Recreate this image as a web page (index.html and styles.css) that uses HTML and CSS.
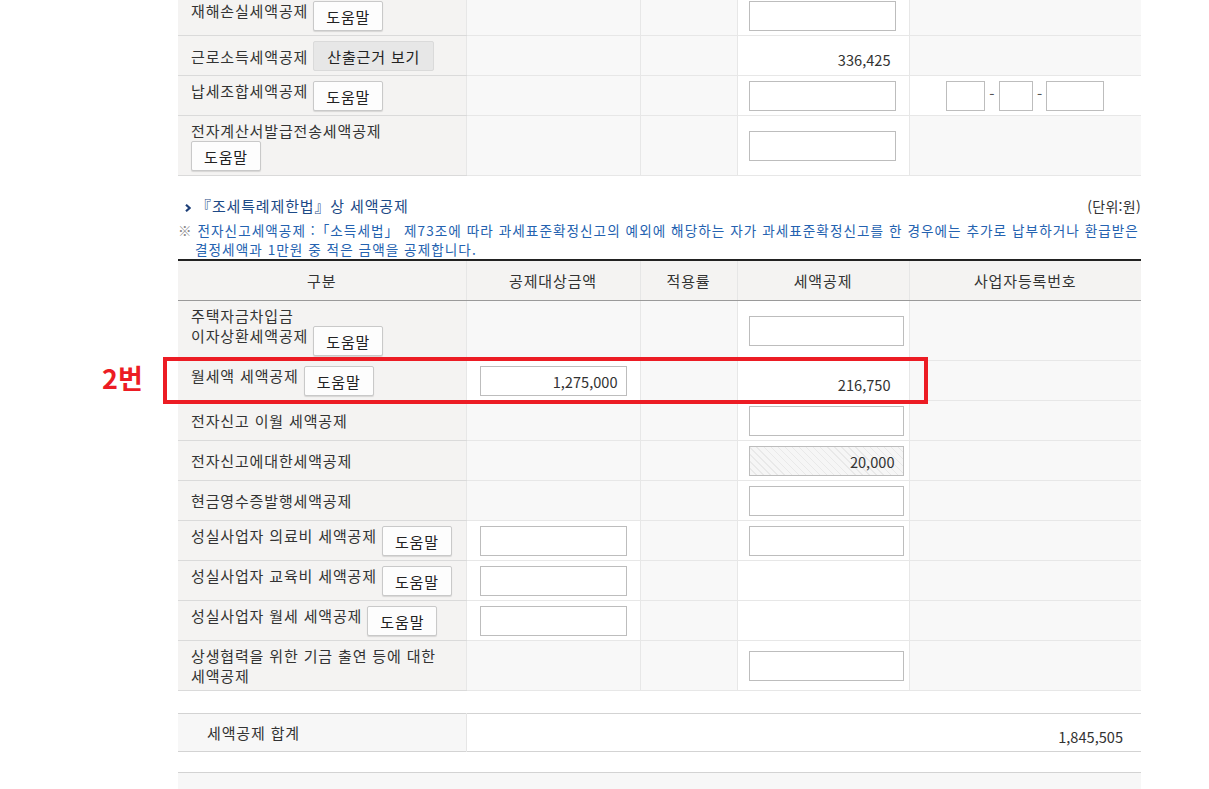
FILE: index.html
```html
<!DOCTYPE html>
<html lang="ko">
<head>
    <meta charset="UTF-8">
    <title>세액공제</title>
    <link rel="stylesheet" href="styles.css">
</head>
<body>
<div class="page">

    <table class="grid">
        <colgroup>
            <col class="w1"><col class="w2"><col class="w3"><col class="w4"><col class="w5">
        </colgroup>
        <tr>
            <td class="lbl">재해손실세액공제 <button class="btn-help">도움말</button></td>
            <td></td>
            <td></td>
            <td class="tax wh"><input type="text" class="inp inp-s"></td>
            <td></td>
        </tr>
        <tr>
            <td class="lbl">근로소득세액공제 <button class="btn-calc">산출근거 보기</button></td>
            <td></td>
            <td></td>
            <td class="tax wh num">336,425</td>
            <td></td>
        </tr>
        <tr>
            <td class="lbl">납세조합세액공제 <button class="btn-help">도움말</button></td>
            <td></td>
            <td></td>
            <td class="tax wh"><input type="text" class="inp inp-s"></td>
            <td class="wh bizno">
                <input type="text" class="inp bn1"> - <input type="text" class="inp bn2"> - <input type="text" class="inp bn3">
            </td>
        </tr>
        <tr>
            <td class="lbl">전자계산서발급전송세액공제<br><button class="btn-help">도움말</button></td>
            <td></td>
            <td></td>
            <td class="tax wh"><input type="text" class="inp inp-s"></td>
            <td></td>
        </tr>
    </table>

    <div class="sect-head">
        <h3 class="sect-title">
            <svg class="chev" width="6" height="8" viewBox="0 0 6 8"><path d="M1 0.8 L4.6 4 L1 7.2" fill="none" stroke="#1d3f78" stroke-width="2.2"/></svg>
            『조세특례제한법』상 세액공제
        </h3>
        <span class="unit">(단위:원)</span>
    </div>
    <p class="note"><span class="mark">※</span> 전자신고세액공제 :「소득세법」 제73조에 따라 과세표준확정신고의 예외에 해당하는 자가 과세표준확정신고를 한 경우에는 추가로 납부하거나 환급받은<br>결정세액과 1만원 중 적은 금액을 공제합니다.</p>

    <div class="annot">
        <table class="grid">
            <colgroup>
                <col class="w1"><col class="w2"><col class="w3"><col class="w4"><col class="w5">
            </colgroup>
            <tr>
                <th>구분</th>
                <th>공제대상금액</th>
                <th>적용률</th>
                <th>세액공제</th>
                <th>사업자등록번호</th>
            </tr>
            <tr>
                <td class="lbl">주택자금차입금<br>이자상환세액공제 <button class="btn-help">도움말</button></td>
                <td></td>
                <td></td>
                <td class="tax wh"><input type="text" class="inp"></td>
                <td></td>
            </tr>
            <tr>
                <td class="lbl">월세액 세액공제 <button class="btn-help">도움말</button></td>
                <td class="amt wh"><input type="text" class="inp inp-s" value="1,275,000"></td>
                <td></td>
                <td class="tax wh num">216,750</td>
                <td></td>
            </tr>
            <tr>
                <td class="lbl">전자신고 이월 세액공제</td>
                <td></td>
                <td></td>
                <td class="tax wh"><input type="text" class="inp"></td>
                <td></td>
            </tr>
            <tr>
                <td class="lbl">전자신고에대한세액공제</td>
                <td></td>
                <td></td>
                <td class="tax wh"><input type="text" class="inp inp-ro" value="20,000" readonly></td>
                <td></td>
            </tr>
            <tr>
                <td class="lbl">현금영수증발행세액공제</td>
                <td></td>
                <td></td>
                <td class="tax wh"><input type="text" class="inp"></td>
                <td></td>
            </tr>
            <tr>
                <td class="lbl">성실사업자 의료비 세액공제 <button class="btn-help">도움말</button></td>
                <td class="amt wh"><input type="text" class="inp inp-s"></td>
                <td></td>
                <td class="tax wh"><input type="text" class="inp"></td>
                <td></td>
            </tr>
            <tr>
                <td class="lbl">성실사업자 교육비 세액공제 <button class="btn-help">도움말</button></td>
                <td class="amt wh"><input type="text" class="inp inp-s"></td>
                <td></td>
                <td class="tax wh"></td>
                <td></td>
            </tr>
            <tr>
                <td class="lbl">성실사업자 월세 세액공제 <button class="btn-help">도움말</button></td>
                <td class="amt wh"><input type="text" class="inp inp-s"></td>
                <td></td>
                <td class="tax wh"></td>
                <td></td>
            </tr>
            <tr>
                <td class="lbl">상생협력을 위한 기금 출연 등에 대한 세액공제</td>
                <td></td>
                <td></td>
                <td class="tax wh"><input type="text" class="inp"></td>
                <td></td>
            </tr>
        </table>

        <!-- 강조 표시 -->
        <div class="mark-box"></div>
        <span class="mark-label">2번</span>
    </div>

    <table class="sum">
        <tr>
            <td class="sum-lbl">세액공제 합계</td>
            <td class="sum-val">1,845,505</td>
        </tr>
    </table>
    <div class="foot-bar"></div>

</div>
</body>
</html>
```

FILE: styles.css
```css
body {
    margin: 0;
    background-color: #fff;
    font-family: "Noto Sans CJK KR", "Noto Sans", sans-serif;
    font-size: 15px;
    letter-spacing: 0.85px;
    color: #333;
}
.page {
    width: 963px;
    margin: -4px 0 0 178px;
}
.grid {
    width: 100%;
    border-collapse: collapse;
    table-layout: fixed;
}
.w1 { width: 288px; }
.w2 { width: 174px; }
.w3 { width: 97px; }
.w4 { width: 172px; }
.w5 { width: 232px; }

.grid th {
    height: 39px;
    padding: 0;
    font-weight: normal;
    line-height: 21px;
    background-color: #f4f3f2;
    border-top: 2px solid #222;
    border-bottom: 1px solid #9a9a9a;
    border-left: 1px solid #e6e6e6;
}
.grid th:first-child {
    border-left: none;
}
.grid td {
    padding: 5px 12px 4px;
    line-height: 20px;
    vertical-align: middle;
    background-color: #f8f8f8;
    border-bottom: 1px solid #e7e7e7;
    border-left: 1px solid #e7e7e7;
}
.grid td.lbl {
    padding-left: 13px;
    padding-right: 2px;
    word-break: keep-all;
    background-color: #f4f3f2;
    border-left: none;
    border-bottom-color: #dadada;
}
.grid td.wh {
    background-color: #fff;
}
.grid td.amt {
    padding-left: 13px;
}
.grid td.tax {
    padding-left: 11px;
}
.grid td.num {
    font-size: 14.6px;
    letter-spacing: 0;
    text-align: right;
    padding-right: 18px;
    vertical-align: bottom;
    padding-bottom: 5px;
}
.grid td.bizno {
    text-align: center;
    color: #555;
    letter-spacing: 0;
}

.btn-help, .btn-calc {
    display: inline-block;
    vertical-align: top;
    height: 30px;
    padding: 0;
    font-family: inherit;
    font-size: 15px;
    letter-spacing: 0.85px;
    color: #222;
    border: 1px solid #c9c9c9;
    border-radius: 2px;
    background-color: #fdfdfd;
    box-shadow: 0 1px 1px rgba(0, 0, 0, 0.12);
    cursor: pointer;
}
.btn-help {
    width: 70px;
}
.btn-calc {
    width: 121px;
    vertical-align: baseline;
    background-color: #e7e7e7;
    border-color: #dadada;
    box-shadow: none;
}

.inp {
    box-sizing: border-box;
    width: 155px;
    height: 30px;
    padding: 0 8px;
    font-family: inherit;
    font-size: 14.6px;
    letter-spacing: 0;
    color: #333;
    text-align: right;
    border: 1px solid #bdbdbd;
    background-color: #fff;
    vertical-align: middle;
}
.inp-s {
    width: 147px;
}
.inp-ro {
    background: repeating-linear-gradient(45deg, #f6f6f6 0, #f6f6f6 4px, #e9e9e9 4px, #e9e9e9 5px);
}
.bn1 { width: 39px; }
.bn2 { width: 34px; }
.bn3 { width: 58px; }

.sect-head {
    display: flex;
    justify-content: space-between;
    align-items: baseline;
    margin-top: 20px;
}
.sect-title {
    margin: 0;
    font-size: 15px;
    font-weight: normal;
    line-height: 20px;
    color: #1d4a86;
    padding-left: 7px;
}
.unit {
    font-size: 14px;
    letter-spacing: 0.3px;
    color: #333;
}
.note {
    margin: 5px 0 0;
    padding-left: 17px;
    text-indent: -17px;
    font-size: 13.6px;
    letter-spacing: 1.05px;
    line-height: 19px;
    color: #2462b0;
    white-space: nowrap;
}
.note .mark {
    color: #888;
}

.annot {
    position: relative;
}
.mark-box {
    position: absolute;
    left: -15px;
    top: 98px;
    width: 765px;
    height: 47px;
    box-sizing: border-box;
    border: 4px solid #ec1c24;
}
.mark-label {
    position: absolute;
    left: -76px;
    top: 105px;
    font-size: 27px;
    font-weight: bold;
    letter-spacing: 0;
    line-height: 1;
    color: #ec1c24;
}

.sum {
    width: 100%;
    margin-top: 22px;
    border-collapse: collapse;
    border-top: 1px solid #d3d3d3;
    border-bottom: 1px solid #d3d3d3;
}
.sum td {
    padding: 0;
}
.sum-lbl {
    width: 288px;
    height: 37px;
    padding-left: 29px !important;
    box-sizing: border-box;
    background-color: #f7f7f7;
    border-right: 1px solid #e6e6e6;
}
.sum-val {
    height: 29px;
    font-size: 14.6px;
    letter-spacing: 0;
    text-align: right;
    padding: 8px 18px 0 0 !important;
}
.foot-bar {
    margin-top: 20px;
    height: 18px;
    border-top: 1px solid #d3d3d3;
    background-color: #f7f7f7;
}
```
